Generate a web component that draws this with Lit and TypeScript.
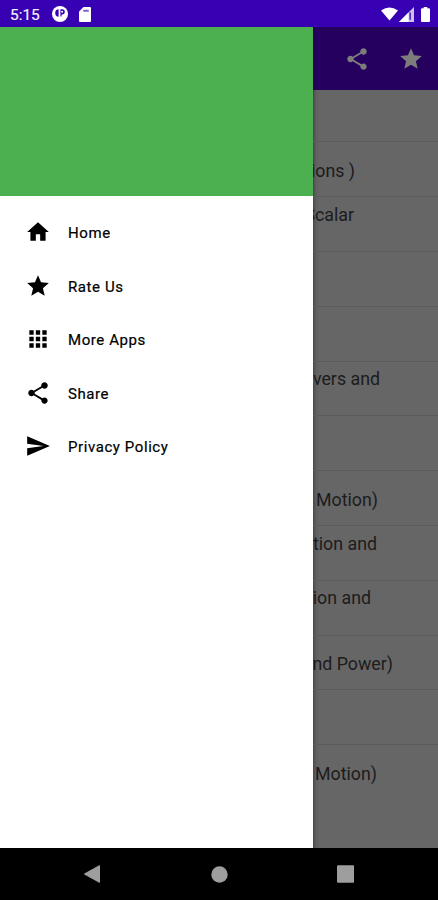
import { LitElement, html, css, svg } from "lit";
import { customElement } from "lit/decorators.js";
import { styleMap } from "lit/directives/style-map.js";

const PATHS: Record<string, string> = {
  home: "M10 20v-6h4v6h5v-8h3L12 3 2 12h3v8z",
  star: "M12 17.27L18.18 21l-1.64-7.03L22 9.24l-7.19-.61L12 2 9.19 8.63 2 9.24l5.46 4.73L5.82 21z",
  apps: "M4 8h4V4H4v4zm6 12h4v-4h-4v4zm-6 0h4v-4H4v4zm0-6h4v-4H4v4zm6 0h4v-4h-4v4zm6-10v4h4V4h-4zm-6 4h4V4h-4v4zm6 6h4v-4h-4v4zm0 6h4v-4h-4v4z",
  share:
    "M18 16.08c-.76 0-1.44.3-1.96.77L8.91 12.7c.05-.23.09-.46.09-.7s-.04-.47-.09-.7l7.05-4.11c.54.5 1.25.81 2.04.81 1.66 0 3-1.34 3-3s-1.34-3-3-3-3 1.34-3 3c0 .24.04.47.09.7L8.04 9.81C7.5 9.31 6.79 9 6 9c-1.66 0-3 1.34-3 3s1.34 3 3 3c.79 0 1.5-.31 2.04-.81l7.12 4.16c-.05.21-.08.43-.08.65 0 1.61 1.31 2.92 2.92 2.92s2.92-1.31 2.92-2.92-1.31-2.92-2.92-2.92z",
  send: "M2.01 21L23 12 2.01 3 2 10l15 2-15 2z",
};

const icon = (name: string) =>
  html`<svg class="icon" viewBox="0 0 24 24">${svg`<path d=${PATHS[name]} />`}</svg>`;

const MENU = [
  ["home", "Home"],
  ["star", "Rate Us"],
  ["apps", "More Apps"],
  ["share", "Share"],
  ["send", "Privacy Policy"],
];

/* Visible end of each chapter title, its alignment and its distance from the right edge. */
const CHAPTERS: { text?: string; top?: boolean; end?: number }[] = [
  {},
  { text: "ions )", end: 83 },
  { text: "Scalar", top: true, end: 84 },
  {},
  {},
  { text: "vers and", top: true, end: 58 },
  {},
  { text: "Motion)", end: 60 },
  { text: "tion and", top: true, end: 61 },
  { text: "ion and", top: true, end: 67 },
  { text: "nd Power)", end: 45 },
  {},
  { text: "Motion)", end: 61 },
];

@customElement("app-root")
export class AppRoot extends LitElement {
  static styles = css`
    :host {
      display: flex;
      flex-direction: column;
      width: 438px;
      height: 900px;
      overflow: hidden;
      font-family: Roboto, "Liberation Sans", sans-serif;
      background: #000;
    }
    svg {
      display: block;
      flex: none;
    }
    .status {
      height: 27px;
      flex: none;
      box-sizing: border-box;
      padding: 1px 8px 0 10px;
      display: flex;
      align-items: center;
      background: #3700b3;
      color: #f4f0fb;
      fill: #fff;
      font-size: 15.4px;
      font-weight: 400;
      -webkit-text-stroke: 0.2px #f4f0fb;
    }
    .clock {
      width: 42px;
      flex: none;
      padding-top: 1px;
    }
    .sd {
      margin-left: 10.5px;
    }
    .wifi {
      margin-left: auto;
    }
    .signal {
      margin-left: 1px;
    }
    .battery {
      margin-left: 7px;
    }
    .body {
      flex: 1;
      min-height: 0;
      display: flex;
    }
    .drawer {
      width: 313px;
      flex: none;
      background: #fff;
    }
    .banner {
      height: 169px;
      background: #4caf50;
      margin-bottom: 9.4px;
    }
    .item {
      height: 53.5px;
      display: flex;
      align-items: center;
      padding-left: 25px;
      gap: 17px;
      font-size: 15px;
      font-weight: 400;
      letter-spacing: 0.58px;
      color: #000;
      -webkit-text-stroke: 0.2px #000;
    }
    .item span {
      padding-top: 2px;
    }
    .icon {
      width: 26px;
      height: 26px;
    }
    .item .icon {
      fill: #000;
    }
    .main {
      flex: 1;
      min-width: 0;
      overflow: hidden;
      background: linear-gradient(90deg, #484848, #606060 3px, #666 7px);
    }
    .toolbar {
      height: 63px;
      box-sizing: border-box;
      display: flex;
      align-items: center;
      justify-content: flex-end;
      gap: 28px;
      padding-right: 14px;
      background: #26005f;
      fill: #7c7c7c;
    }
    .row {
      height: 54.8px;
      box-sizing: border-box;
      display: flex;
      justify-content: flex-end;
      align-items: center;
      padding-top: 2.4px;
      border-bottom: 1px solid #5b5b5b;
      font-size: 17.8px;
      line-height: 21px;
      white-space: nowrap;
      color: #1c1c1c;
    }
    .row:first-child {
      height: 52.4px;
    }
    .row:last-child {
      border-bottom-color: transparent;
    }
    .row.top {
      align-items: flex-start;
      padding-top: 6.6px;
    }
    .nav {
      height: 52px;
      flex: none;
      display: flex;
      align-items: center;
      fill: #9e9e9e;
      background: #000;
    }
    .back {
      margin-left: 83px;
    }
    .circle {
      margin-left: 110px;
    }
    .recent {
      margin-left: 108.5px;
    }
  `;

  render() {
    return html`
      <div class="status">
        <span class="clock">5:15</span>
        <svg width="16" height="16" viewBox="0 0 16 16">
          <circle cx="8" cy="8" r="8" />
          <path d="M6.6 3.2v7.6C4.4 10.7 3.2 9.2 3.2 7S4.4 3.3 6.6 3.2zM8.4 3.2h1.8a2.6 2.6 0 0 1 0 5.2H9.6v2.2H8.4z" fill="#3700b3" />
          <circle cx="10.1" cy="5.8" r="1" />
        </svg>
        <svg class="sd" width="12" height="15" viewBox="0 0 12 15">
          <path d="M4.5 0H11a1 1 0 0 1 1 1v13a1 1 0 0 1-1 1H1a1 1 0 0 1-1-1V4.5z" />
          <path d="M4.2 2.8h5.6v1.9H4.2z" fill="#3700b3" opacity=".65" />
        </svg>
        <svg class="wifi" width="17" height="14" viewBox="0 0 18 14">
          <path d="M0 3.2Q9-3.2 18 3.2L9 14z" />
        </svg>
        <svg class="signal" width="15" height="15" viewBox="0 0 15 15">
          <path d="M0 15L15 0V15z" opacity=".75" />
          <path d="M0 15L9.5 5.5V15z" />
          <path d="M10.5 5.5h1.3v7.3h-1.3z" fill="#3700b3" />
        </svg>
        <svg class="battery" width="9" height="15" viewBox="0 0 9 15">
          <path d="M2.7 0h3.6v1.3H8a1 1 0 0 1 1 1V14a1 1 0 0 1-1 1H1a1 1 0 0 1-1-1V2.3a1 1 0 0 1 1-1h1.7z" />
        </svg>
      </div>
      <div class="body">
        <div class="drawer">
          <div class="banner"></div>
          ${MENU.map(([name, label]) => html`<div class="item">${icon(name)}<span>${label}</span></div>`)}
        </div>
        <div class="main">
          <div class="toolbar">${icon("share")}${icon("star")}</div>
          <div class="list">
            ${CHAPTERS.map(
              (c) => html`<div
                class="row ${c.top ? "top" : ""}"
                style=${styleMap({ paddingRight: `${c.end ?? 0}px` })}
              >${c.text ? html`<span>${c.text}</span>` : ""}</div>`
            )}
          </div>
        </div>
      </div>
      <div class="nav">
        <svg class="back" width="18" height="20" viewBox="0 0 18 20">
          <path d="M16.5 1.6V18.4L1.4 10z" stroke="#9e9e9e" stroke-linejoin="round" />
        </svg>
        <svg class="circle" width="17" height="17" viewBox="0 0 17 17"><circle cx="8.5" cy="8.5" r="8.2" /></svg>
        <svg class="recent" width="17.5" height="18" viewBox="0 0 18 18"><rect width="18" height="18" rx="1.2" /></svg>
      </div>
    `;
  }
}
